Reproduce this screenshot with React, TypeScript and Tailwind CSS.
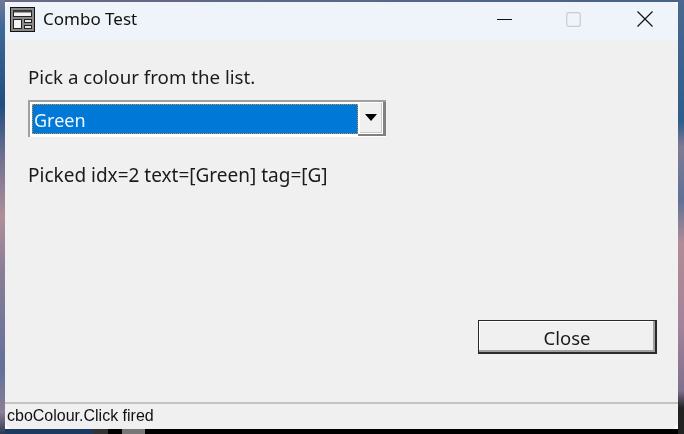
import React from "react"

const uiFont = "font-['Noto_Sans','Open_Sans',sans-serif]"

function AppIcon() {
  return (
    <svg width="25" height="25" viewBox="0 0 25 25" className="shrink-0">
      <rect x="0.5" y="0.5" width="24" height="24" fill="#8a8a8a" stroke="#111" />
      <rect x="3.5" y="3.5" width="18" height="6" fill="#f4f4f4" stroke="#222" />
      <rect x="3.5" y="3.5" width="18" height="2" fill="#444" />
      <rect x="3.5" y="12.5" width="8" height="9" fill="#f4f4f4" stroke="#222" />
      <rect x="14.5" y="12.5" width="7" height="3" fill="#e8e8e8" stroke="#222" />
      <rect x="14.5" y="18.5" width="7" height="3" fill="#e8e8e8" stroke="#222" />
    </svg>
  )
}

function TitleBar() {
  return (
    <div className="h-[38px] flex items-center bg-[#eff3fa] pl-[5px] pb-[4px] shrink-0">
      <AppIcon />
      <span className={`ml-[8px] text-[17px] text-[#111] ${uiFont}`}>Combo Test</span>
      <div className="ml-auto flex items-center">
        <svg width="15" height="16" viewBox="0 0 15 16" className="mr-[54px]">
          <path d="M0 8.5H15" stroke="#111" strokeWidth="1" />
        </svg>
        <svg width="15" height="15" viewBox="0 0 15 15" className="mr-[56px]">
          <rect x="0.7" y="0.7" width="13.6" height="13.6" rx="2" fill="none" stroke="#c9cbd0" strokeWidth="1.2" />
        </svg>
        <svg width="16" height="16" viewBox="0 0 16 16" className="mr-[25px]">
          <path d="M0.5 0.5L15.5 15.5M15.5 0.5L0.5 15.5" stroke="#111" strokeWidth="1.2" />
        </svg>
      </div>
    </div>
  )
}

function Combo() {
  return (
    <div className="w-[358px] h-[37px] flex border-l-2 border-t-2 border-[#a0a0a0] bg-white">
      <div className="flex-1 flex items-center bg-[#0078d7] border border-dotted border-[#d98c3a] pl-[1px] pt-[2px] ml-[2px] mt-[2px] mb-[3px]">
        <span className={`text-[18px] leading-none text-[#eef6ff] ${uiFont}`}>Green</span>
      </div>
      <div className="w-[28px] border-r-[3px] border-b-[2px] border-[#808080] mb-[1px] flex">
        <div className="flex-1 flex items-center justify-center m-[1px] ml-[2px] bg-[#f0f0f0] border-r border-b border-[#c8c8c8]">
          <svg width="12" height="7" viewBox="0 0 12 7">
            <path d="M0 0H12L6 7Z" fill="#000" />
          </svg>
        </div>
      </div>
    </div>
  )
}

export default function App() {
  return (
    <div className="w-[684px] h-[434px] overflow-hidden flex blur-[0.4px]">
      <div className="w-[5px] shrink-0 bg-[linear-gradient(180deg,#6f7a96_0%,#3f6a98_6%,#1f4d80_24%,#6f6f90_36%,#b08f98_50%,#8a7f96_62%,#62709a_85%,#8a7f96_95%,#2a3a50_100%)]" />
      <div className="w-[673px] shrink-0 flex flex-col">
        <div className="h-[2px] shrink-0 bg-[linear-gradient(90deg,#6b6a85,#46628c)]" />
        <div className="h-[427px] shrink-0 flex flex-col rounded-[8px] overflow-hidden bg-[#f0f0f0]">
          <TitleBar />
          <div className="flex-1 flex flex-col pl-[23px] pr-[21px]">
            <p className={`mt-[24px] text-[18.7px] leading-[26px] text-[#1a1a1a] ${uiFont}`}>Pick a colour from the list.</p>
            <div className="mt-[10px]">
              <Combo />
            </div>
            <p className={`mt-[25px] text-[19px] leading-[26px] text-[#1a1a1a] ${uiFont}`}>Picked idx=2 text=[Green] tag=[G]</p>
            <div className="mt-auto mb-[48px] flex justify-end">
              <button className={`w-[179px] h-[34px] pt-[3px] bg-[#f0f0f0] border-t border-l border-r-2 border-b-2 border-[#2a2a2a] shadow-[inset_-2px_-2px_0_#a0a0a0,inset_1px_1px_0_#fff] text-[18.5px] leading-none text-[#1a1a1a] ${uiFont}`}>
                Close
              </button>
            </div>
          </div>
          <div className="h-[27px] shrink-0 border-t-2 border-[#c4c4c4] pl-[2px] pb-[1px] flex items-center">
            <span className="font-['Liberation_Sans',sans-serif] text-[16px] text-[#111]">cboColour.Click fired</span>
          </div>
        </div>
        <div className="flex-1 flex bg-black">
          <div className="w-[88px] bg-[#1c3a60]" />
          <div className="w-[15px] bg-[#333]" />
          <div className="w-[14px]" />
          <div className="w-[23px] bg-[#777]" />
        </div>
      </div>
      <div className="w-[6px] shrink-0 bg-[linear-gradient(180deg,#4a6890_0%,#2f5d8c_28%,#7f7b94_34%,#5f7198_46%,#b08c96_56%,#a3839a_75%,#7f7090_90%,#222_94%,#222_100%)]" />
    </div>
  )
}
